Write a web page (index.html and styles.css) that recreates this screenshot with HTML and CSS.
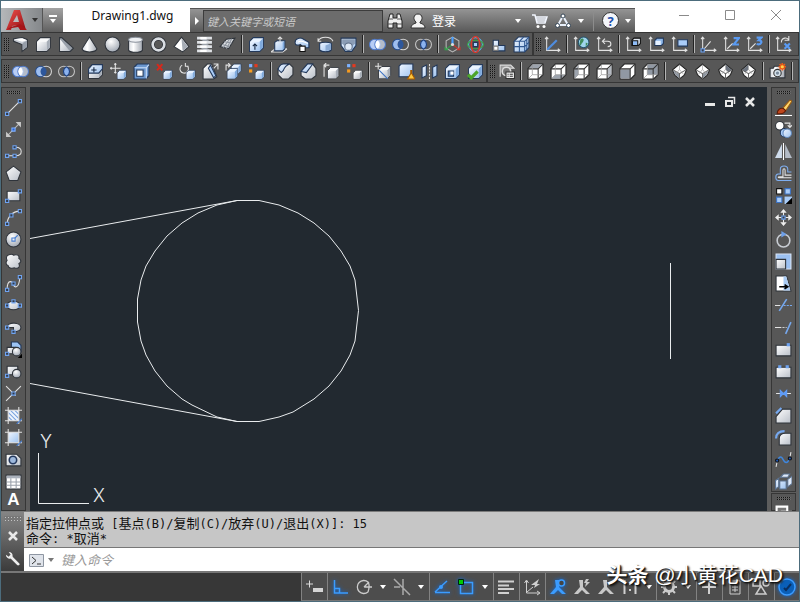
FILE: index.html
```html
<!DOCTYPE html>
<html lang="zh-CN">
<head>
    <meta charset="UTF-8">
    <meta name="viewport" content="width=device-width, initial-scale=1.0">
    <title>Drawing1.dwg</title>
    <link rel="stylesheet" href="styles.css">
</head>
<body>
    <!-- Icon sprite -->
    <svg class="sprite" aria-hidden="true">
        <defs>
            <linearGradient id="lt" x1="0" y1="0" x2="1" y2="1"><stop offset="0" stop-color="#fff"/><stop offset="1" stop-color="#b9bfc8"/></linearGradient>
            <linearGradient id="cyl" x1="0" y1="0" x2="1" y2="0"><stop offset="0" stop-color="#d5d9de"/><stop offset=".35" stop-color="#fff"/><stop offset="1" stop-color="#a2a8b1"/></linearGradient>
            <linearGradient id="bl" x1="0" y1="0" x2="1" y2="1"><stop offset="0" stop-color="#f0f6ff"/><stop offset="1" stop-color="#9dc2ef"/></linearGradient>
            <radialGradient id="ball" cx=".4" cy=".3" r=".7"><stop offset="0" stop-color="#fff"/><stop offset="1" stop-color="#a3aab5"/></radialGradient>
            <linearGradient id="red" x1="0" y1="0" x2="1" y2="1"><stop offset="0" stop-color="#f0504c"/><stop offset="1" stop-color="#8f0d12"/></linearGradient>
        </defs>
        <symbol id="cube" viewBox="0 0 16 16"><path d="M1.500 5l3.500-3.500h9.500V11L11 14.500H1.500z" class="w" fill="#f8f9fa"/><path d="M2 5.500h9V14H2z" fill="url(#lt)"/><path d="M11 5.500L14 2v9l-3 3z" fill="#a6adb7"/></symbol>
        <symbol id="bcube" viewBox="0 0 16 16"><path d="M1.500 5l3.500-3.500h9.500V11L11 14.500H1.500z" class="k" fill="#e9f3ff"/><path d="M2 5.500h9V14H2z" fill="url(#bl)"/><path d="M11 5.500L14 2v9l-3 3z" fill="#7faade"/></symbol>
        <symbol id="polysolid" viewBox="0 0 16 16"><path class="w" d="M1.500 2.500l8-1 5 2v7l-5 4V8l-8-3z" fill="#c9ced6"/><path d="M2 3l7.500-1L14 4l-4.500 1.500z" fill="#fff"/><path d="M10 6.500l4-2v6l-4 3z" fill="#979ea9"/></symbol>
        <symbol id="wedge" viewBox="0 0 16 16"><path class="w" d="M1.500 1.500h2l11 10-3 3h-10z" fill="#989fa9"/><path d="M2 3v11h9z" fill="url(#lt)"/></symbol>
        <symbol id="cone" viewBox="0 0 16 16"><path class="w" d="M8 1L1 12c1 4 13 4 14 0z" fill="url(#cyl)"/></symbol>
        <symbol id="sphere" viewBox="0 0 16 16"><circle class="w" cx="8" cy="8" r="7" fill="url(#ball)"/></symbol>
        <symbol id="cylinder" viewBox="0 0 16 16"><path class="w" d="M1.500 3.500v10c2 2.500 11 2.500 13 0v-10z" fill="url(#cyl)"/><ellipse cx="8" cy="3.500" rx="6.500" ry="2.300" fill="#eef0f3" stroke="#8b929c"/></symbol>
        <symbol id="torus" viewBox="0 0 16 16"><circle cx="8" cy="8" r="5.500" fill="none" stroke="#2b2f36" stroke-width="4"/><circle cx="8" cy="8" r="5.500" fill="none" stroke="#d9dde2" stroke-width="2.500"/></symbol>
        <symbol id="pyramid" viewBox="0 0 16 16"><path class="w" d="M8 1l7 9-6 5-8-5z" fill="#fff"/><path d="M8 2l6 8-5 4z" fill="#a6acb5"/></symbol>
        <symbol id="helix" viewBox="0 0 16 16"><path d="M5 2l7 4M5 6l7 4M5 10l7 4" stroke="#9aa1aa" stroke-width="3"/><path d="M1 2h14M1 6h14M1 10h14M1 14h14" stroke="#dfe2e6" stroke-width="2.500"/><path d="M4 2h6M4 6h6M4 10h6M4 14h6" stroke="#fff" stroke-width="2"/></symbol>
        <symbol id="planar" viewBox="0 0 16 16"><path class="w" d="M1 10L7 3l8-1-6 10-8-2z" fill="url(#lt)"/><path d="M3 8l7 2M5 5.500l7 1M4 11l6-8M7 12l5-9.500" stroke="#8e959f" fill="none"/></symbol>
        <symbol id="presspull" viewBox="0 0 16 16"><use href="#bcube"/><path class="d" d="M6.500 13V8M4.500 9.500L6.500 7.500l2 2"/></symbol>
        <symbol id="extrude" viewBox="0 0 16 16"><path class="l" d="M0 15l4-3h11M0 15h11l4-3"/><path class="k" d="M3.500 6l2-1.500h7.500V12l-2 2H3.500z" fill="url(#bl)"/><path d="M11 6l1.500-1v6.500L11 13z" fill="#7faade"/><path class="l" d="M8.500 6V1M6.500 3l2-2 2 2"/></symbol>
        <symbol id="sweep" viewBox="0 0 16 16"><path class="k" d="M1 6c0-4 5-5 8-3l5 3v5H9L6 8C4 9 1 9 1 6z" fill="url(#bl)"/><path d="M4 6c2-3 6 0 9 1" stroke="#fff" fill="none"/><path d="M5.500 9.500h5v5h-5z" fill="#fff" stroke="#111"/></symbol>
        <symbol id="revolve" viewBox="0 0 16 16"><path class="l" d="M1 5c2-5 12-5 14 0M1 2v3h3"/><path class="k" d="M2.500 7v6c2 2.500 9 2.500 11 0V7c-2-1.500-9-1.500-11 0z" fill="url(#bl)"/><path d="M8 9v5l5-1V7z" fill="#8babd4"/></symbol>
        <symbol id="loft" viewBox="0 0 16 16"><path class="k" d="M1 2h14v7l-4 5.500H5L1 9z" fill="url(#bl)"/><path d="M2 3h12v4l-3 3H5L2 7z" fill="#8a9cb5"/><circle cx="8" cy="10" r="3.500" fill="#dfe9f6" stroke="#5d6e86"/></symbol>
        <symbol id="union" viewBox="0 0 16 16"><circle cx="5.500" cy="8" r="5" fill="#b8cdf5" stroke="#4d78c8"/><circle cx="10.500" cy="8" r="5" fill="#dce7fb" fill-opacity=".7" stroke="#4d78c8"/><path d="M8 4a5 5 0 010 8 5 5 0 010-8" fill="#fff"/></symbol>
        <symbol id="subtract" viewBox="0 0 16 16"><circle cx="5.500" cy="8" r="5" fill="#9dbef0" stroke="#274d8c"/><circle cx="10.500" cy="8" r="5" fill="#555" stroke="#d5d5d5"/><path d="M8 3.500a5 5 0 010 9 5 5 0 010-9" fill="#2d579c"/></symbol>
        <symbol id="intersect" viewBox="0 0 16 16"><circle cx="5.500" cy="8" r="5" fill="none" stroke="#c4c4c4"/><circle cx="10.500" cy="8" r="5" fill="none" stroke="#c4c4c4"/><path d="M8 3.500a5 5 0 010 9 5 5 0 010-9" fill="#8bb2ee" stroke="#1d3f7c"/></symbol>
        <symbol id="move3d" viewBox="0 0 16 16"><path d="M8 1l6 3.500v7L8 15l-6-3.500v-7z" fill="none" stroke="#b9b9b9"/><path d="M8 8V1" stroke="#4aa0ff" stroke-width="2"/><path d="M8 8l-7 5M1 10v3h3" stroke="#2fa648" fill="none"/><path d="M8 8l7 5M15 10v3h-3" stroke="#d0352b" fill="none"/><circle cx="8" cy="8" r="1.500" fill="#ddd"/></symbol>
        <symbol id="rotate3d" viewBox="0 0 16 16"><circle cx="8" cy="8" r="6.500" fill="none" stroke="#5cb2e8"/><ellipse cx="8" cy="8" rx="7.500" ry="4" fill="none" stroke="#3da547"/><ellipse cx="8" cy="8" rx="4" ry="7.500" fill="none" stroke="#d3392d" stroke-width="1.500"/><path d="M6 6h4v4H6z" fill="#a9ccf8" stroke="#22385a"/></symbol>
        <symbol id="align3d" viewBox="0 0 16 16"><path class="k" d="M3 4h5v5h6v5H3z" fill="url(#bl)"/><path d="M3.500 9.500h4v4h-4z" fill="#fff" stroke="#777"/></symbol>
        <symbol id="array3d" viewBox="0 0 16 16"><path class="k" d="M1 5l4-4h10v10l-4 4H1z" fill="url(#bl)"/><path d="M1 5h10l4-4M11 5v10M1 10h10l4-4M6 5v10M6 5l4-4M13 3v10" fill="none" stroke="#2f5791"/></symbol>
        <symbol id="axes" viewBox="0 0 16 16"><path class="l" d="M2.500 1v12.500H15M1 3l1.500-2L4 3M13 12l2 1.500-2 1.500"/></symbol>
        <symbol id="ucs" viewBox="0 0 16 16"><use href="#axes"/><path d="M3 13l9-9" stroke="#4f8de0" stroke-width="2"/></symbol>
        <symbol id="world" viewBox="0 0 16 16"><use href="#axes"/><circle cx="10" cy="6" r="5" fill="#9fd4ec" stroke="#24516a"/><path d="M7 3c3-2 4 1 2 3s-1 4-3 2zM12 6l2 1-2 3z" fill="#3f8b5b"/></symbol>
        <symbol id="previous" viewBox="0 0 16 16"><use href="#axes"/><path class="l" d="M6 5h5c4 0 4 5 0 5M8.500 2.500L6 5l2.500 2.500"/></symbol>
        <symbol id="ucsface" viewBox="0 0 16 16"><use href="#axes"/><path d="M6.500 4l2-2h6v5l-2 2h-6z" fill="#dfe6ef" stroke="#111"/><path d="M7 4.500h5V9H7z" fill="#8fbcf5" stroke="#111"/></symbol>
        <symbol id="ucsobject" viewBox="0 0 16 16"><use href="#axes"/><path class="k" d="M6.500 4l2-2h6v5l-2 2h-6z" fill="#8db6e8"/><path d="M7 4.500h5v4H7z" fill="#e6f1ff"/></symbol>
        <symbol id="ucsview" viewBox="0 0 16 16"><use href="#axes"/><path class="k" d="M6.500 3.500h9v6h-9z" fill="#a9ccf8"/></symbol>
        <symbol id="origin" viewBox="0 0 16 16"><use href="#axes"/><path class="l" d="M4 12l6-7"/><path class="n" d="M1 12h3v3H1z"/></symbol>
        <symbol id="zaxis" viewBox="0 0 16 16"><use href="#axes"/><path class="l" d="M4 12l5-5"/><path class="z" d="M10 2h5l-5 6h5"/></symbol>
        <symbol id="threepoint" viewBox="0 0 16 16"><use href="#axes"/><path class="l" d="M4 12l5-5"/><path class="z" d="M10 1.500h4.500L12 4c4 0 3 5-2 3.500"/></symbol>
        <symbol id="xrotate" viewBox="0 0 16 16"><use href="#axes"/><path class="l" d="M6 6c0-5 6-5 7-2M13 0v4H9"/><path class="z" d="M9 7l5 5M14 7l-5 5"/></symbol>
        <symbol id="exface" viewBox="0 0 16 16"><use href="#cube"/><path class="k" d="M1.500 5.500l3.500-4h9.500v4l-3.500 4h-9.500z" fill="url(#bl)"/><path class="d" d="M6.500 9V4M4 6.500h5"/></symbol>
        <symbol id="moveface" viewBox="0 0 16 16"><path class="l" d="M5 0v10M0 5h10M4 1.500L5 .5l1 1M4 8.500l1 1 1-1M1.500 4l-1 1 1 1"/><use href="#bcube" x="6" y="6" width="10" height="10"/></symbol>
        <symbol id="offsetface" viewBox="0 0 16 16"><path class="k" d="M1 4l3-3h11v11l-3 3H1z" fill="#6b97cf"/><path d="M1.500 4.500h11v10M12.500 4.500L15 1.500" fill="none" stroke="#cde1fa"/><path class="k" d="M3.500 6.500h6v6h-6z" fill="#fff"/></symbol>
        <symbol id="deleteface" viewBox="0 0 16 16"><path d="M1 1l5 6M6 1L1 7" stroke="#d5291c" stroke-width="2"/><use href="#bcube" x="6" y="6" width="10" height="10"/></symbol>
        <symbol id="rotateface" viewBox="0 0 16 16"><path class="l" d="M3 2a4 4 0 105 1M6 0v3h3"/><use href="#bcube" x="6" y="6" width="10" height="10"/></symbol>
        <symbol id="taperface" viewBox="0 0 16 16"><path class="w" d="M1 5l4-4h4l5 12-3 2H1z" fill="url(#lt)"/><path class="k" d="M6 5l2-3 5 10-2 2z" fill="#a9ccf8"/><path class="l" d="M11 1h4v5M11 5l4-4"/></symbol>
        <symbol id="copyface" viewBox="0 0 16 16"><path class="l" d="M1 7V2h4M3 0l2 2-2 2"/><use href="#bcube" x="5" y="0" width="11" height="11"/><use href="#bcube" x="1" y="4" width="12" height="12"/></symbol>
        <symbol id="colorface" viewBox="0 0 16 16"><path d="M1 1h3v3H1z" fill="#7db2ff"/><path d="M6 1h3v3H6z" fill="#e33a20"/><path d="M1 6h3v3H1z" fill="#f59b20"/><use href="#bcube" x="6" y="6" width="10" height="10"/></symbol>
        <symbol id="filletedge" viewBox="0 0 16 16"><path class="w" d="M1 5l5-4h6l3 3v7l-4 4H5l-4-4z" fill="url(#lt)"/><path class="k" d="M1 6c1-3 3-5 5-5h6C9 2 7 4 6 7L4 9z" fill="url(#bl)"/></symbol>
        <symbol id="chamferedge" viewBox="0 0 16 16"><path class="w" d="M1 8l6-7h5l3 4v7l-4 3H5l-4-3z" fill="url(#lt)"/><path class="k" d="M1 8l6-7h5L6 9z" fill="url(#bl)"/></symbol>
        <symbol id="copyedge" viewBox="0 0 16 16"><path class="l" d="M1 13V2h5M3 0L1 2l2 2"/><use href="#cube" x="3" y="3" width="13" height="13"/></symbol>
        <symbol id="coloredge" viewBox="0 0 16 16"><path d="M1 1h3v3H1z" fill="#7db2ff"/><path d="M6 1h3v3H6z" fill="#e33a20"/><path d="M1 6h3v3H1z" fill="#f59b20"/><use href="#cube" x="6" y="6" width="10" height="10"/></symbol>
        <symbol id="imprint" viewBox="0 0 16 16"><use href="#cube" x="2" y="2" width="14" height="14"/><path d="M4 7l8 8" stroke="#3d73c4"/><path class="l" d="M3 0v6M0 3h6"/></symbol>
        <symbol id="clean" viewBox="0 0 16 16"><path class="k" d="M1 3l2-2h11v10l-2 2H1z" fill="url(#bl)"/><path d="M12 7v3l-3 5h7l-3-5V7z" fill="#ffc83d" stroke="#a75b00"/></symbol>
        <symbol id="separate" viewBox="0 0 16 16"><path class="k" d="M1 4l4-2v10l-4 2zM11 4l4-2v10l-4 2z" fill="url(#bl)"/><path d="M8 1v14" stroke="#ddd" stroke-dasharray="2 1"/></symbol>
        <symbol id="shell" viewBox="0 0 16 16"><use href="#bcube"/><path class="k" d="M4 7.500h5v5H4z" fill="#5a84bd"/><path d="M6 8h3v3H6z" fill="#fff"/></symbol>
        <symbol id="check" viewBox="0 0 16 16"><use href="#bcube"/><path d="M1 11l3 3 6-6" fill="none" stroke="#4ca52b" stroke-width="3"/></symbol>
        <symbol id="views" viewBox="0 0 16 16"><path d="M2 13V2h10l3 3H4" fill="#999" stroke="#ddd"/><circle cx="8" cy="8" r="4" fill="#777" stroke="#ddd" stroke-width="1.500"/><path d="M7.500 8.500h8v6h-8z" fill="#eee" stroke="#333"/><path d="M9 10.500h1M11 10.500h3M9 12.500h1M11 12.500h3" stroke="#333"/></symbol>
        <symbol id="wire" viewBox="0 0 16 16"><path d="M1 5l4-4h10v10l-4 4H1z" fill="#fff" stroke="#222"/></symbol>
        <symbol id="wirelines" viewBox="0 0 16 16"><path d="M1 5.500h9.500V15M10.500 5.500L15 1" fill="none" stroke="#333"/><path d="M5 1.500V11h9.500M1.500 14.500L5 11" fill="none" stroke="#999" stroke-width=".7"/></symbol>
        <symbol id="vtop" viewBox="0 0 16 16"><use href="#wire"/><path d="M2 5l3-3.500h9L10.500 5z" fill="#9ca3ad"/><use href="#wirelines"/></symbol>
        <symbol id="vbottom" viewBox="0 0 16 16"><use href="#wire"/><path d="M2 14.500L5 11h9l-3.500 3.500z" fill="#9ca3ad"/><use href="#wirelines"/></symbol>
        <symbol id="vleft" viewBox="0 0 16 16"><use href="#wire"/><path d="M1.500 6L5 2v9l-3.500 3.500z" fill="#9ca3ad"/><use href="#wirelines"/></symbol>
        <symbol id="vright" viewBox="0 0 16 16"><use href="#wire"/><path d="M11 6l3.500-4v9L11 14.500z" fill="#b5bac2"/><use href="#wirelines"/></symbol>
        <symbol id="vfront" viewBox="0 0 16 16"><use href="#wire"/><path d="M1.500 6h9v8.500h-9z" fill="#9098a3"/><path d="M1 5.500h9.500V15M10.500 5.500L15 1" fill="none" stroke="#333"/></symbol>
        <symbol id="vback" viewBox="0 0 16 16"><use href="#wire"/><path d="M5 1.500h9.500V11H5z" fill="#9098a3"/><use href="#wirelines"/></symbol>
        <symbol id="iso" viewBox="0 0 16 16"><path d="M8 1l6.500 5.500-2 5L8 15l-4.500-3.500-2-5z" fill="#fff" stroke="#222"/></symbol>
        <symbol id="isolines" viewBox="0 0 16 16"><path d="M2 6.500L8 10l6-3.500M8 10v5" fill="none" stroke="#666"/><path d="M8 1.500V6M4 11l4-5 4 5" fill="none" stroke="#aaa" stroke-width=".7"/></symbol>
        <symbol id="sw" viewBox="0 0 16 16"><use href="#iso"/><path d="M2 7l6 3.500v4L4 11z" fill="#8e96a1"/><use href="#isolines"/></symbol>
        <symbol id="se" viewBox="0 0 16 16"><use href="#iso"/><path d="M14 7l-6 3.500v4l4-3.500z" fill="#8e96a1"/><use href="#isolines"/></symbol>
        <symbol id="ne" viewBox="0 0 16 16"><use href="#iso"/><path d="M8 1.500l6 5L11 9 8 6z" fill="#6b727d"/><use href="#isolines"/></symbol>
        <symbol id="nw" viewBox="0 0 16 16"><use href="#iso"/><path d="M8 1.500l-6 5L5 9l3-3z" fill="#6b727d"/><use href="#isolines"/></symbol>
        <symbol id="camera" viewBox="0 0 16 16"><path class="w" d="M1 5h3l1-2h5l1 2h4v9H1z" fill="url(#cyl)"/><circle cx="8" cy="9.500" r="3.500" fill="#d3e0ea" stroke="#333"/><circle cx="8" cy="9.500" r="1.500" fill="#78889a"/><path d="M12.500 0v7M9 3.500h7M10 1l5 5M15 1l-5 5" stroke="#f05a16" stroke-width="1.500"/><circle cx="12.500" cy="3.500" r="1.500" fill="#ffd34a"/></symbol>

        <symbol id="line" viewBox="0 0 16 16"><path class="l" d="M2 14L14 2"/><path class="n" d="M.5 12.500h3v3h-3zM12.500.5h3v3h-3z"/></symbol>
        <symbol id="xline" viewBox="0 0 16 16"><path d="M3 13L13 3" stroke="#bbb"/><path d="M10 1h5v5zM1 10v5h5z" fill="#c9c9c9"/><path d="M6.500 6.500h3v3h-3z" fill="#2b62d0" stroke="#7fb0ff"/></symbol>
        <symbol id="pline" viewBox="0 0 16 16"><path class="l" d="M2 12h8c7 0 7-8 0-8H8"/><path class="n" d="M.5 10.500h3v3h-3zM7.500 10.500h3v3h-3zM7.500 2.500h3v3h-3z"/></symbol>
        <symbol id="polygon" viewBox="0 0 16 16"><path class="w" d="M8 1l7 5.500-3 8H4l-3-8z" fill="url(#lt)"/></symbol>
        <symbol id="rect" viewBox="0 0 16 16"><path class="w" d="M2 4h12v9H2z" fill="url(#lt)"/><path class="n" d="M.5 11.500h3v3h-3zM12.500 2.500h3v3h-3z"/></symbol>
        <symbol id="arc" viewBox="0 0 16 16"><path class="l" d="M2 14C2 8 7 2 14 2"/><path class="n" d="M.5 12.500h3v3h-3zM4.500 4.500h3v3h-3zM12.500.5h3v3h-3z"/></symbol>
        <symbol id="circle" viewBox="0 0 16 16"><circle class="w" cx="8" cy="8" r="7" fill="url(#ball)"/><path d="M8 8l4-4" stroke="#4a7fd0"/><path d="M6.500 6.500h3v3h-3z" fill="#e8effa" stroke="#4a7fd0"/></symbol>
        <symbol id="revcloud" viewBox="0 0 16 16"><path class="w" d="M3 2c2-1 4-1 5 0 3-1 6 0 5 3 3 2 2 4 0 5 2 4-2 5-4 4-3 1-6 0-6-2-3-1-2-4-1-5-1-2-1-4 1-5z" fill="url(#lt)"/></symbol>
        <symbol id="spline" viewBox="0 0 16 16"><path class="l" d="M2 14c0-12 6-7 6-5s5 6 6-7"/><path class="n" d="M.5 12.500h3v3h-3zM6.500 6.500h3v3h-3zM12.500.5h3v3h-3z"/></symbol>
        <symbol id="ellipse" viewBox="0 0 16 16"><ellipse class="w" cx="8" cy="8" rx="6.500" ry="4" fill="url(#lt)"/><path class="n" d="M.5 6.500h3v3h-3zM6.500 2.500h3v3h-3zM12.500 6.500h3v3h-3z"/></symbol>
        <symbol id="ellarc" viewBox="0 0 16 16"><path class="w" d="M2 8c0-6 13-5 13 0 0 4-4 4-7 4V8z" fill="url(#lt)"/><path class="n" d="M.5 6.500h3v3h-3zM6.500 10.500h3v3h-3z"/></symbol>
        <symbol id="insert" viewBox="0 0 16 16"><path class="k" d="M6 1h6l3 3v6H6z" fill="#9cc4f5"/><path class="w" d="M2 6h8v6H2z" fill="url(#lt)"/><circle class="w" cx="11" cy="10" r="4" fill="url(#ball)"/><path class="n" d="M.5 10.500h3v3h-3z"/><path d="M16 12v4h-4z" fill="#000"/></symbol>
        <symbol id="block" viewBox="0 0 16 16"><path class="w" d="M2 3h10v8H2z" fill="url(#lt)"/><circle class="w" cx="11" cy="10" r="4" fill="url(#ball)"/><path class="n" d="M.5 10.500h3v3h-3z"/></symbol>
        <symbol id="point" viewBox="0 0 16 16"><path class="l" d="M1 1l9 9M15 1L1 15"/><path class="n" d="M6.500 6.500h3v3h-3z"/></symbol>
        <symbol id="hatch" viewBox="0 0 16 16"><path d="M3 3h10v10H3z" fill="#eef4fc"/><path d="M3 9l4 4M3 5l8 8M5 3l8 8M9 3l4 4" stroke="#79a2de"/><path class="l" d="M3 0v16M13 0v16M0 3h16M0 13h16"/><path d="M11 16l5-5" stroke="#4a7fd0"/></symbol>
        <symbol id="gradient" viewBox="0 0 16 16"><path d="M3 3h10v10H3z" fill="url(#bl)"/><path class="l" d="M3 0v16M13 0v16M0 3h16M0 13h16"/><path d="M11 16l5-5" stroke="#4a7fd0"/></symbol>
        <symbol id="region" viewBox="0 0 16 16"><path class="w" d="M1 3h10l4 4v7H1z" fill="url(#lt)"/><circle cx="7.500" cy="8.500" r="3.500" fill="#9db8dc" stroke="#24395e" stroke-width="1.500"/></symbol>
        <symbol id="table" viewBox="0 0 16 16"><path class="w" d="M1 2h14v13H1z" fill="#fff"/><path d="M1.500 2.500h13V5h-13z" fill="#aab1bb"/><path d="M1.500 8.500h13M1.500 11.500h13M5.500 5v9.500M10.500 5v9.500" stroke="#9aa1ab"/></symbol>

        <symbol id="matchprop" viewBox="0 0 16 16"><path d="M7 9l7-8 2 1-6 9z" fill="#ffd66b" stroke="#9a5b12"/><path d="M2 14c0-4 3-6 6-5l2 2c-2 3-4 3-8 3z" fill="#c0471c" stroke="#601c08"/><path d="M0 15.500h16" stroke="#fff"/></symbol>
        <symbol id="copy" viewBox="0 0 16 16"><circle class="w" cx="4.500" cy="4.500" r="4" fill="#fff"/><circle class="k" cx="9" cy="11" r="4" fill="#a9ccf8"/><circle cx="11.500" cy="11.500" r="4" fill="url(#bl)" stroke="#5f86bb"/><path class="l" d="M9 2h5v4M12 4l2 2 2-2"/></symbol>
        <symbol id="mirror" viewBox="0 0 16 16"><path d="M6.500 1v13H0z" fill="#cfdcec"/><path d="M9.500 1v13H16z" fill="#b3bbc6"/><path d="M8 0v16" stroke="#fff"/></symbol>
        <symbol id="offset" viewBox="0 0 16 16"><path d="M15.500 6.500H12V4c0-4-7-4-7 0v4.500H3c-3 0-3 6 0 6h12.500" fill="none" stroke="#7eaef0"/><path class="l" d="M15.500 9.500h-6V5c0-2-2-2-2 0v6H4.500c-2 0-2 1 0 1h11"/></symbol>
        <symbol id="array" viewBox="0 0 16 16"><path d="M1.500 1.500h5v5h-5z" fill="#fff" stroke="#111"/><path d="M9.500 1.500h5v5h-5zM1.500 9.500h5v5h-5z" fill="#a9ccf8" stroke="#3d73c4"/><path d="M9 9h7v7H9z" fill="#a9ccf8"/><path d="M16 10v6h-6z" fill="#000"/></symbol>
        <symbol id="move" viewBox="0 0 16 16"><path d="M8 0l3 3.500H5zM8 16l3-3.500H5zM0 8l3.500-3v6zM16 8l-3.500-3v6z" fill="#eee"/><path d="M8 3v3M8 10v3M3 8h3M10 8h3" stroke="#eee"/><path class="n" d="M6.500 6.500h3v3h-3z"/></symbol>
        <symbol id="rotate" viewBox="0 0 16 16"><circle cx="8" cy="9" r="6" fill="none" stroke="#c8ccd2" stroke-width="1.500"/><path d="M6 0l5 3-5 3z" fill="#6d9fe8"/></symbol>
        <symbol id="scale" viewBox="0 0 16 16"><path d="M1 1h14v14H1z" fill="#9cc1f2" stroke="#dbe8fa"/><path class="w" d="M1 6h9v9H1z" fill="url(#lt)"/></symbol>
        <symbol id="stretch" viewBox="0 0 16 16"><path class="w" d="M1 1h10l4 14H1z" fill="#fff"/><path d="M8 1.500h2.500l4 13H8z" fill="#a9cbf3"/><path d="M4 11h7M9 9l3 2-3 2" stroke="#000" stroke-width="1.500" fill="none"/></symbol>
        <symbol id="trim" viewBox="0 0 16 16"><path class="l" d="M0 8h5"/><path d="M4 13L11 2" stroke="#76a8ee" stroke-width="1.500"/><path d="M8 8h8" stroke="#76a8ee" stroke-dasharray="2 1"/></symbol>
        <symbol id="extend" viewBox="0 0 16 16"><path class="l" d="M0 8h6"/><path d="M7 8h4" stroke="#ccc" stroke-dasharray="2 1"/><path d="M10 14l5-11" stroke="#76a8ee" stroke-width="1.500"/></symbol>
        <symbol id="breakpt" viewBox="0 0 16 16"><path class="w" d="M1 4h14v10H1z" fill="url(#lt)"/><path d="M11 2h3v3h-3z" fill="#6da2f0"/></symbol>
        <symbol id="break" viewBox="0 0 16 16"><path class="w" d="M1 4h14v10H1z" fill="url(#lt)"/><path d="M3 2h3v3H3zM10 2h3v3h-3z" fill="#6da2f0"/></symbol>
        <symbol id="join" viewBox="0 0 16 16"><path class="l" d="M1 8h14"/><path d="M5 5l3 3-3 3zM11 5L8 8l3 3z" fill="#5f9bf5" stroke="#5f9bf5"/></symbol>
        <symbol id="chamfer" viewBox="0 0 16 16"><path class="w" d="M1 9l6-7h8v13H1z" fill="url(#lt)"/><path d="M1 6l5-5" stroke="#76a8ee" stroke-width="2"/></symbol>
        <symbol id="fillet" viewBox="0 0 16 16"><path class="w" d="M4 15V9c0-4 3-5 6-5h5v11z" fill="url(#lt)"/><path d="M1 9c0-5 3-7 8-7" stroke="#76a8ee" stroke-width="2" fill="none"/></symbol>
        <symbol id="blend" viewBox="0 0 16 16"><path class="l" d="M1 15l1-5M14 6l1-5"/><path d="M2 9c4-7 5-1 7 1s4 0 5-4" fill="none" stroke="#3f86dd" stroke-width="1.500"/><circle cx="2" cy="9" r="1.500" fill="#1d56b5" stroke="#111"/><circle cx="14" cy="7" r="1.500" fill="#1d56b5" stroke="#111"/></symbol>
        <symbol id="explode" viewBox="0 0 16 16"><path d="M5 4l3-3h6l-2 3zM12 6l4-3v7l-4 3z" fill="#dfeafa" stroke="#5b7290"/><path d="M4.500 7.500h6V15h-6zM.5 7l3-2v8l-3 2z" fill="url(#bl)" stroke="#5b7290"/></symbol>
        <symbol id="front" viewBox="0 0 16 16"><path d="M1.500 1.500h10v7h-10zM6.500 6.500h9v8h-9z" fill="#777" stroke="#fff" stroke-width="2"/></symbol>

        <symbol id="logo" viewBox="0 0 24 24"><path d="M1 22L9 2h6l6 20h-6l-2-5-6 1-1 4z" fill="url(#red)"/><path d="M8 14l4-7 2 7z" fill="#b9babc"/><path d="M1 22l5-3 9-3 7 6h-6l-3-3-6 1z" fill="#a81418"/></symbol>
        <symbol id="find" viewBox="0 0 16 16"><path d="M3 1h3v4h4V1h3l2 7v7h-5v-5H6v5H1V8z" fill="#eee" stroke="#222"/><path d="M1 11h5M10 11h5M2 6h4M10 6h4" stroke="#555"/></symbol>
        <symbol id="user" viewBox="0 0 16 16"><path d="M8 1c5 0 5 6 2 8v1c3 1 5 2 5 5H1c0-3 2-4 5-5V9C3 7 3 1 8 1z" fill="#f4f4f4" stroke="#333"/></symbol>
        <symbol id="cart" viewBox="0 0 16 16"><path d="M0 2h3l2 8h8l2-6H4M4 6h10M5 8h9" fill="none" stroke="#f2f6ff" stroke-width="1.500"/><circle cx="6" cy="13.500" r="1.500" fill="#fff"/><circle cx="12" cy="13.500" r="1.500" fill="#fff"/></symbol>
        <symbol id="a360" viewBox="0 0 16 16"><path d="M8 3l5 9H3z" fill="none" stroke="#e8effa" stroke-width="2"/><circle cx="8" cy="3" r="2" fill="#fff" stroke="#345"/><circle cx="2.500" cy="12.500" r="2" fill="#fff" stroke="#345"/><circle cx="13.500" cy="12.500" r="2" fill="#fff" stroke="#345"/></symbol>
        <symbol id="down" viewBox="0 0 8 8"><path d="M1 2h6L4 6z" fill="currentColor"/></symbol>
        <symbol id="next" viewBox="0 0 8 8"><path d="M2 0l4 4-4 4z" fill="currentColor"/></symbol>
        <symbol id="min" viewBox="0 0 12 12"><path d="M1 6.500h10" stroke="currentColor"/></symbol>
        <symbol id="max" viewBox="0 0 12 12"><path d="M1.500 1.500h9v9h-9z" fill="none" stroke="currentColor"/></symbol>
        <symbol id="close" viewBox="0 0 12 12"><path d="M1 1l10 10M11 1L1 11" stroke="currentColor"/></symbol>
        <symbol id="docmin" viewBox="0 0 12 12"><path d="M1 8.500h10" stroke="#e8e8e8" stroke-width="3"/></symbol>
        <symbol id="docmax" viewBox="0 0 12 12"><path d="M4 1.500h6.500V8" fill="none" stroke="#e8e8e8" stroke-width="1.500"/><path d="M2 5h6v5H2z" fill="none" stroke="#e8e8e8" stroke-width="2"/></symbol>
        <symbol id="docclose" viewBox="0 0 12 12"><path d="M2 2l8 8M10 2l-8 8" stroke="#e8e8e8" stroke-width="2.500"/></symbol>
        <symbol id="wrench" viewBox="0 0 16 16"><path d="M6 6l8 8" stroke="#eee" stroke-width="3" stroke-linecap="round"/><path d="M1 4a4 4 0 005 4l2-2a4 4 0 00-4-5l2 3-2 2z" fill="#eee"/></symbol>
        <symbol id="prompt" viewBox="0 0 16 16"><path d="M.5 2.500h14v12H.5z" fill="#dfe3ea" stroke="#8e96a2"/><path d="M3 5l4 3.500L3 12M8 12h4" fill="none" stroke="#333"/></symbol>

        <symbol id="infer" viewBox="0 0 18 18"><path d="M1 6h7M4.500 2.500v7" stroke="#ddd"/><path d="M8 10h10v4H8z" fill="#d5d5d5"/></symbol>
        <symbol id="ortho" viewBox="0 0 18 18"><path d="M3.500 2v13H17M3.500 10.500h5V15" fill="none" stroke="#3b9cff" stroke-width="1.500"/></symbol>
        <symbol id="polar" viewBox="0 0 18 18"><path d="M9 9h8M9 9l5-5M13 14A6.500 6.500 0 1113 4M13 4c2 3 1 7 0 10" fill="none" stroke="#ccc" stroke-width="1.300"/></symbol>
        <symbol id="isodraft" viewBox="0 0 18 18"><path d="M1 1l16 16M10 1v16M1 9h6" fill="none" stroke="#aaa" stroke-width="1.500"/></symbol>
        <symbol id="track" viewBox="0 0 18 18"><path d="M2 14.500h15M2 14L14 3" stroke="#3b9cff" stroke-width="1.500"/><circle cx="8" cy="9" r="2" fill="#3b9cff"/></symbol>
        <symbol id="osnap" viewBox="0 0 18 18"><path d="M3.500 4.500h12v11h-12z" fill="none" stroke="#3b9cff" stroke-width="1.500"/><path d="M1.500 1.500h5v5h-5z" fill="#0c0" stroke="#021"/></symbol>
        <symbol id="lweight" viewBox="0 0 18 18"><path d="M1 3.500h16M1 7.500h11M1 11h16M1 15h11" stroke="#d0d0d0" stroke-width="2"/></symbol>
        <symbol id="dynucs" viewBox="0 0 18 18"><path d="M3.500 3v12H16M1.500 5l2-3 2 3M14 13l3 2-3 2M4 14l6-5" fill="none" stroke="#d0d0d0"/><path d="M8 7l8-6-2 5h3l-6 4 1-3z" fill="#d0d0d0"/></symbol>
        <symbol id="anno" viewBox="0 0 18 18"><path d="M6 2h4v7l7 7h-4l-4-4-4 4H1l6-7z" fill="currentColor"/></symbol>
        <symbol id="annovis" viewBox="0 0 18 18"><use href="#anno"/><circle cx="12.500" cy="5" r="3" fill="#444" stroke="currentColor" stroke-width="1.500"/></symbol>
        <symbol id="annoauto" viewBox="0 0 18 18"><use href="#anno"/><path d="M13 1l-2 4h2l-1 4 5-5h-3l2-3z" fill="currentColor"/></symbol>
        <symbol id="ratio" viewBox="0 0 18 18"><path d="M3.500 2v14M14.500 2v14M1 4l2-2M12 4l2-2" stroke="#d0d0d0" stroke-width="2"/><path d="M8 5h2v2H8zM8 11h2v2H8z" fill="#d0d0d0"/></symbol>
        <symbol id="gear" viewBox="0 0 18 18"><circle cx="9" cy="9" r="4.500" fill="none" stroke="#ccc" stroke-width="3"/><path d="M9 1v3M9 14v3M1 9h3M14 9h3M3 3l3 3M12 12l3 3M15 3l-3 3M6 12l-3 3" stroke="#ccc" stroke-width="2"/></symbol>
        <symbol id="plus" viewBox="0 0 18 18"><path d="M9 2v14M2 9h14" stroke="#d0d0d0" stroke-width="2"/></symbol>
        <symbol id="props" viewBox="0 0 18 18"><path d="M4 3h10v13H4zM6 6h6M6 9h6M6 12h6M9 5v9" fill="none" stroke="#ccc"/></symbol>
        <symbol id="isolate" viewBox="0 0 18 18"><path d="M1 1h7v7H1zM9 8l5 8H4z" fill="none" stroke="#ccc" stroke-width="1.500"/><circle cx="14" cy="5" r="3" fill="none" stroke="#ccc" stroke-width="1.500"/></symbol>
        <symbol id="perf" viewBox="0 0 18 18"><circle cx="9" cy="9" r="8" fill="#0a5fb8" stroke="#3b9cff" stroke-width="1.500"/><path d="M6 10l2 2 5-6" fill="none" stroke="#0a2f60" stroke-width="2"/></symbol>
    </svg>

    <header class="titlebar">
        <button class="app-button" aria-label="Application menu"><svg class="logo"><use href="#logo"/></svg><svg class="caret"><use href="#down"/></svg></button>
        <button class="quick-button" aria-label="Quick access"><span class="quick-line"></span><svg class="caret"><use href="#down"/></svg></button>
        <h1 class="doc-title">Drawing1.dwg</h1>
        <div class="infobar">
            <button class="info-toggle" aria-label="Collapse"><svg class="caret"><use href="#next"/></svg></button>
            <input class="search" type="text" placeholder="键入关键字或短语" aria-label="Search">
            <button class="tool" aria-label="Find"><svg><use href="#find"/></svg></button>
            <button class="signin"><svg><use href="#user"/></svg><span>登录</span><svg class="caret"><use href="#down"/></svg></button>
            <button class="tool" aria-label="Store"><svg><use href="#cart"/></svg></button>
            <button class="tool" aria-label="A360"><svg><use href="#a360"/></svg></button>
            <button class="drop" aria-label="A360 options"><svg class="caret"><use href="#down"/></svg></button>
            <span class="info-sep"></span>
            <button class="help" aria-label="Help">?</button>
            <button class="drop" aria-label="Help options"><svg class="caret"><use href="#down"/></svg></button>
        </div>
        <div class="window-buttons">
            <button aria-label="Minimize"><svg><use href="#min"/></svg></button>
            <button aria-label="Maximize"><svg><use href="#max"/></svg></button>
            <button aria-label="Close"><svg><use href="#close"/></svg></button>
        </div>
    </header>

    <div class="toolbar-row">
        <div class="bar">
            <span class="grip"></span>
            <button class="tool" aria-label="Polysolid"><svg><use href="#polysolid"/></svg></button>
            <button class="tool" aria-label="Box"><svg><use href="#cube"/></svg></button>
            <button class="tool" aria-label="Wedge"><svg><use href="#wedge"/></svg></button>
            <button class="tool" aria-label="Cone"><svg><use href="#cone"/></svg></button>
            <button class="tool" aria-label="Sphere"><svg><use href="#sphere"/></svg></button>
            <button class="tool" aria-label="Cylinder"><svg><use href="#cylinder"/></svg></button>
            <button class="tool" aria-label="Torus"><svg><use href="#torus"/></svg></button>
            <button class="tool" aria-label="Pyramid"><svg><use href="#pyramid"/></svg></button>
            <button class="tool" aria-label="Helix"><svg><use href="#helix"/></svg></button>
            <button class="tool" aria-label="Planar surface"><svg><use href="#planar"/></svg></button>
            <span class="sep"></span>
            <button class="tool" aria-label="Presspull"><svg><use href="#presspull"/></svg></button>
            <button class="tool" aria-label="Extrude"><svg><use href="#extrude"/></svg></button>
            <button class="tool" aria-label="Sweep"><svg><use href="#sweep"/></svg></button>
            <button class="tool" aria-label="Revolve"><svg><use href="#revolve"/></svg></button>
            <button class="tool" aria-label="Loft"><svg><use href="#loft"/></svg></button>
            <span class="sep"></span>
            <button class="tool" aria-label="Union"><svg><use href="#union"/></svg></button>
            <button class="tool" aria-label="Subtract"><svg><use href="#subtract"/></svg></button>
            <button class="tool" aria-label="Intersect"><svg><use href="#intersect"/></svg></button>
            <span class="sep"></span>
            <button class="tool" aria-label="3D move"><svg><use href="#move3d"/></svg></button>
            <button class="tool" aria-label="3D rotate"><svg><use href="#rotate3d"/></svg></button>
            <button class="tool" aria-label="3D align"><svg><use href="#align3d"/></svg></button>
            <button class="tool" aria-label="3D array"><svg><use href="#array3d"/></svg></button>
        </div>
        <div class="bar bar-fill">
            <span class="grip"></span>
            <button class="tool" aria-label="UCS"><svg><use href="#ucs"/></svg></button>
            <span class="sep"></span>
            <button class="tool" aria-label="World"><svg><use href="#world"/></svg></button>
            <button class="tool" aria-label="UCS previous"><svg><use href="#previous"/></svg></button>
            <span class="sep"></span>
            <button class="tool" aria-label="Face UCS"><svg><use href="#ucsface"/></svg></button>
            <button class="tool" aria-label="Object UCS"><svg><use href="#ucsobject"/></svg></button>
            <button class="tool" aria-label="View UCS"><svg><use href="#ucsview"/></svg></button>
            <span class="sep"></span>
            <button class="tool" aria-label="Origin"><svg><use href="#origin"/></svg></button>
            <button class="tool" aria-label="Z axis vector"><svg><use href="#zaxis"/></svg></button>
            <button class="tool" aria-label="3 point"><svg><use href="#threepoint"/></svg></button>
            <span class="sep"></span>
            <button class="tool" aria-label="Rotate X"><svg><use href="#xrotate"/></svg></button>
        </div>
    </div>

    <div class="toolbar-row">
        <div class="bar">
            <span class="grip"></span>
            <button class="tool" aria-label="Union"><svg><use href="#union"/></svg></button>
            <button class="tool" aria-label="Subtract"><svg><use href="#subtract"/></svg></button>
            <button class="tool" aria-label="Intersect"><svg><use href="#intersect"/></svg></button>
            <span class="sep"></span>
            <button class="tool" aria-label="Extrude faces"><svg><use href="#exface"/></svg></button>
            <button class="tool" aria-label="Move faces"><svg><use href="#moveface"/></svg></button>
            <button class="tool" aria-label="Offset faces"><svg><use href="#offsetface"/></svg></button>
            <button class="tool" aria-label="Delete faces"><svg><use href="#deleteface"/></svg></button>
            <button class="tool" aria-label="Rotate faces"><svg><use href="#rotateface"/></svg></button>
            <button class="tool" aria-label="Taper faces"><svg><use href="#taperface"/></svg></button>
            <button class="tool" aria-label="Copy faces"><svg><use href="#copyface"/></svg></button>
            <button class="tool" aria-label="Color faces"><svg><use href="#colorface"/></svg></button>
            <span class="sep"></span>
            <button class="tool" aria-label="Fillet edges"><svg><use href="#filletedge"/></svg></button>
            <button class="tool" aria-label="Chamfer edges"><svg><use href="#chamferedge"/></svg></button>
            <button class="tool" aria-label="Copy edges"><svg><use href="#copyedge"/></svg></button>
            <button class="tool" aria-label="Color edges"><svg><use href="#coloredge"/></svg></button>
            <span class="sep"></span>
            <button class="tool" aria-label="Imprint"><svg><use href="#imprint"/></svg></button>
            <button class="tool" aria-label="Clean"><svg><use href="#clean"/></svg></button>
            <button class="tool" aria-label="Separate"><svg><use href="#separate"/></svg></button>
            <button class="tool" aria-label="Shell"><svg><use href="#shell"/></svg></button>
            <button class="tool" aria-label="Check"><svg><use href="#check"/></svg></button>
        </div>
        <div class="bar bar-fill">
            <span class="grip"></span>
            <button class="tool" aria-label="Named views"><svg><use href="#views"/></svg></button>
            <span class="sep"></span>
            <button class="tool" aria-label="Top"><svg><use href="#vtop"/></svg></button>
            <button class="tool" aria-label="Bottom"><svg><use href="#vbottom"/></svg></button>
            <button class="tool" aria-label="Left"><svg><use href="#vleft"/></svg></button>
            <button class="tool" aria-label="Right"><svg><use href="#vright"/></svg></button>
            <button class="tool" aria-label="Front"><svg><use href="#vfront"/></svg></button>
            <button class="tool" aria-label="Back"><svg><use href="#vback"/></svg></button>
            <span class="sep"></span>
            <button class="tool" aria-label="SW isometric"><svg><use href="#sw"/></svg></button>
            <button class="tool" aria-label="SE isometric"><svg><use href="#se"/></svg></button>
            <button class="tool" aria-label="NE isometric"><svg><use href="#ne"/></svg></button>
            <button class="tool" aria-label="NW isometric"><svg><use href="#nw"/></svg></button>
            <span class="sep"></span>
            <button class="tool" aria-label="Create camera"><svg><use href="#camera"/></svg></button>
            <span class="sep"></span>
        </div>
    </div>

    <main class="workspace">
        <div class="dock">
            <div class="bar bar-vertical bar-fill">
                <span class="grip"></span>
                <button class="tool" aria-label="Line"><svg><use href="#line"/></svg></button>
                <button class="tool" aria-label="Construction line"><svg><use href="#xline"/></svg></button>
                <button class="tool" aria-label="Polyline"><svg><use href="#pline"/></svg></button>
                <button class="tool" aria-label="Polygon"><svg><use href="#polygon"/></svg></button>
                <button class="tool" aria-label="Rectangle"><svg><use href="#rect"/></svg></button>
                <button class="tool" aria-label="Arc"><svg><use href="#arc"/></svg></button>
                <button class="tool" aria-label="Circle"><svg><use href="#circle"/></svg></button>
                <button class="tool" aria-label="Revision cloud"><svg><use href="#revcloud"/></svg></button>
                <button class="tool" aria-label="Spline"><svg><use href="#spline"/></svg></button>
                <button class="tool" aria-label="Ellipse"><svg><use href="#ellipse"/></svg></button>
                <button class="tool" aria-label="Ellipse arc"><svg><use href="#ellarc"/></svg></button>
                <button class="tool" aria-label="Insert block"><svg><use href="#insert"/></svg></button>
                <button class="tool" aria-label="Make block"><svg><use href="#block"/></svg></button>
                <button class="tool" aria-label="Point"><svg><use href="#point"/></svg></button>
                <button class="tool" aria-label="Hatch"><svg><use href="#hatch"/></svg></button>
                <button class="tool" aria-label="Gradient"><svg><use href="#gradient"/></svg></button>
                <button class="tool" aria-label="Region"><svg><use href="#region"/></svg></button>
                <button class="tool" aria-label="Table"><svg><use href="#table"/></svg></button>
                <button class="tool mtext" aria-label="Multiline text">A</button>
            </div>
        </div>

        <section class="canvas">
            <svg class="drawing">
                <path d="M0 151.500L207 113.500M0 296.500L207 334.500M640.500 176v96"/>
                <polygon points="207,113.500 229,113.500 249,118 268,126 284,136 299,149 311,164 320,179 325,193 328.500,223.500 325,254 320,268 311,284 299,299 284,312 263,325 249,330 229,334.500 207,334.500 187,330 162,318 152,312 137,299 125,284 116,268 111,254 107.500,235 107.500,212 111,193 116,179 125,164 137,149 152,136 168,126 187,118"/>
            </svg>
            <svg class="ucs-icon" viewBox="0 0 76 84">
                <path d="M3.500 20v50.500H54"/>
                <text x="11" y="15">Y</text>
                <text x="64" y="69">X</text>
            </svg>
            <div class="doc-buttons">
                <button aria-label="Minimize drawing"><svg><use href="#docmin"/></svg></button>
                <button aria-label="Restore drawing"><svg><use href="#docmax"/></svg></button>
                <button aria-label="Close drawing"><svg><use href="#docclose"/></svg></button>
            </div>
        </section>

        <div class="dock dock-right">
            <div class="bar bar-vertical">
                <span class="grip"></span>
                <button class="tool" aria-label="Match properties"><svg><use href="#matchprop"/></svg></button>
                <button class="tool" aria-label="Copy"><svg><use href="#copy"/></svg></button>
                <button class="tool" aria-label="Mirror"><svg><use href="#mirror"/></svg></button>
                <button class="tool" aria-label="Offset"><svg><use href="#offset"/></svg></button>
                <button class="tool" aria-label="Array"><svg><use href="#array"/></svg></button>
                <button class="tool" aria-label="Move"><svg><use href="#move"/></svg></button>
                <button class="tool" aria-label="Rotate"><svg><use href="#rotate"/></svg></button>
                <button class="tool" aria-label="Scale"><svg><use href="#scale"/></svg></button>
                <button class="tool" aria-label="Stretch"><svg><use href="#stretch"/></svg></button>
                <button class="tool" aria-label="Trim"><svg><use href="#trim"/></svg></button>
                <button class="tool" aria-label="Extend"><svg><use href="#extend"/></svg></button>
                <button class="tool" aria-label="Break at point"><svg><use href="#breakpt"/></svg></button>
                <button class="tool" aria-label="Break"><svg><use href="#break"/></svg></button>
                <button class="tool" aria-label="Join"><svg><use href="#join"/></svg></button>
                <button class="tool" aria-label="Chamfer"><svg><use href="#chamfer"/></svg></button>
                <button class="tool" aria-label="Fillet"><svg><use href="#fillet"/></svg></button>
                <button class="tool" aria-label="Blend curves"><svg><use href="#blend"/></svg></button>
                <button class="tool" aria-label="Explode"><svg><use href="#explode"/></svg></button>
            </div>
            <div class="bar bar-vertical bar-fill">
                <span class="grip"></span>
                <button class="tool" aria-label="Bring to front"><svg><use href="#front"/></svg></button>
            </div>
        </div>
    </main>

    <section class="command">
        <div class="command-handle">
            <span class="grip"></span>
            <button aria-label="Close command line"><svg><use href="#docclose"/></svg></button>
            <button aria-label="Customize"><svg class="wrench"><use href="#wrench"/></svg></button>
        </div>
        <div class="command-body">
            <div class="history">
                <p><span>指定拉伸点或</span> [<span>基点</span>(B)/<span>复制</span>(C)/<span>放弃</span>(U)/<span>退出</span>(X)]: 15</p>
                <p><span>命令</span>: *<span>取消</span>*</p>
            </div>
            <div class="command-line">
                <button class="prompt" aria-label="Recent commands"><svg><use href="#prompt"/></svg><svg class="caret"><use href="#down"/></svg></button>
                <input type="text" placeholder="键入命令" aria-label="Command">
            </div>
        </div>
    </section>

    <footer class="statusbar">
        <div class="group"><button aria-label="Infer constraints"><svg><use href="#infer"/></svg></button></div>
        <div class="group">
            <button class="on" aria-label="Ortho"><svg><use href="#ortho"/></svg></button>
            <button aria-label="Polar tracking"><svg><use href="#polar"/></svg></button>
            <button class="drop" aria-label="Polar options"><svg class="caret"><use href="#down"/></svg></button>
            <button aria-label="Isometric drafting"><svg><use href="#isodraft"/></svg></button>
            <button class="drop" aria-label="Isometric options"><svg class="caret"><use href="#down"/></svg></button>
        </div>
        <div class="group">
            <button class="on" aria-label="Object snap tracking"><svg><use href="#track"/></svg></button>
            <button class="on" aria-label="Object snap"><svg><use href="#osnap"/></svg></button>
            <button class="drop" aria-label="Snap options"><svg class="caret"><use href="#down"/></svg></button>
        </div>
        <div class="group"><button aria-label="Lineweight"><svg><use href="#lweight"/></svg></button></div>
        <div class="group"><button aria-label="Dynamic UCS"><svg><use href="#dynucs"/></svg></button></div>
        <div class="group group-tight">
            <button class="on" aria-label="Annotation visibility"><svg><use href="#annovis"/></svg></button>
            <button aria-label="Auto scale"><svg><use href="#annoauto"/></svg></button>
            <button aria-label="Annotation scale"><svg><use href="#anno"/></svg></button>
            <button aria-label="Scale ratio"><svg><use href="#ratio"/></svg></button>
            <button class="drop" aria-label="Scale options"><svg class="caret"><use href="#down"/></svg></button>
        </div>
        <div class="group">
            <button aria-label="Workspace"><svg><use href="#gear"/></svg></button>
            <button class="drop" aria-label="Workspace options"><svg class="caret"><use href="#down"/></svg></button>
        </div>
        <div class="group"><button aria-label="Annotation monitor"><svg><use href="#plus"/></svg></button></div>
        <div class="group"><button aria-label="Quick properties"><svg><use href="#props"/></svg></button></div>
        <div class="group"><button aria-label="Isolate objects"><svg><use href="#isolate"/></svg></button></div>
        <div class="group group-tight"><button class="on" aria-label="Graphics performance"><svg><use href="#perf"/></svg></button></div>
    </footer>

    <div class="watermark"><b>头条</b> @小黄花CAD</div>
</body>
</html>
```
FILE: styles.css
```css
* {
    box-sizing: border-box;
}
body {
    display: flex;
    flex-direction: column;
    height: 100vh;
    margin: 0;
    overflow: hidden;
    position: relative;
    border: 1px solid #4c6c7c;
    background-color: #5d5d5d;
    font-family: "Noto Sans", "Noto Sans CJK SC", sans-serif;
    font-size: 12px;
    color: #fff;
}
button {
    display: flex;
    align-items: center;
    justify-content: center;
    flex: none;
    margin: 0;
    padding: 0;
    border: none;
    background: none;
    color: inherit;
    font: inherit;
}
svg {
    display: block;
    flex: none;
    width: 16px;
    height: 16px;
}
.sprite {
    position: absolute;
    width: 0;
    height: 0;
}
.caret {
    width: 8px;
    height: 8px;
}

/* icon strokes */
.w {
    stroke: #2f343b;
}
.k {
    stroke: #22385a;
}
.l {
    fill: none;
    stroke: #e2e2e2;
}
.d {
    fill: none;
    stroke: #10233f;
}
.n {
    fill: #333b49;
    stroke: #6fa4f2;
}
.z {
    fill: none;
    stroke: #5a9bf3;
    stroke-width: 2;
}

/* title bar */
.titlebar {
    display: flex;
    align-items: flex-end;
    flex: none;
    height: 31px;
    background-color: #fff;
}
.app-button {
    gap: 2px;
    width: 41px;
    height: 24px;
    background: linear-gradient(90deg, #b4b7b9, #85888b);
    color: #333;
}
.logo {
    width: 24px;
    height: 24px;
}
.quick-button {
    flex-direction: column;
    width: 21px;
    height: 24px;
    border-left: 1px solid #555;
    background: linear-gradient(#a3a3a3, #606060);
}
.quick-line {
    width: 8px;
    height: 2px;
    background-color: #fff;
}
.doc-title {
    width: 127px;
    margin: 0;
    padding-left: 12px;
    color: #111;
    font-size: 12px;
    font-weight: normal;
    line-height: 32px;
    text-align: center;
}
.infobar {
    display: flex;
    align-items: center;
    flex: 1;
    min-width: 0;
    height: 24px;
    background: linear-gradient(#949494, #595959);
    border-top: 1px solid #555;
}
.info-toggle {
    width: 13px;
    height: 23px;
}
.search {
    width: 180px;
    height: 22px;
    margin: 0;
    padding: 0 3px;
    border: 1px solid #3c3c3c;
    background-color: #6c6c6c;
    color: #fff;
    font: italic 11px "Noto Sans CJK SC", sans-serif;
}
.search::placeholder {
    color: #c9c9c9;
}
.infobar .tool {
    height: 22px;
}
.signin {
    flex: 1;
    justify-content: flex-start;
    gap: 6px;
    padding: 0 6px 0 4px;
}
.signin .caret {
    margin-left: auto;
}
.drop {
    width: 14px;
}
.info-sep {
    width: 1px;
    height: 20px;
    margin: 0 6px 0 5px;
    background-color: #8c8c8c;
}
.help {
    width: 17px;
    height: 17px;
    margin: 0 2px;
    border: 1px solid #333;
    border-radius: 50%;
    background-color: #f4f6fa;
    color: #1c4fae;
    font-weight: bold;
    font-size: 13px;
    line-height: 16px;
}
.window-buttons {
    display: flex;
    align-self: stretch;
    margin-left: 26px;
    color: #8a8a8a;
}
.window-buttons button {
    width: 46px;
    height: 28px;
}
.window-buttons svg {
    width: 12px;
    height: 12px;
}

/* toolbars */
.toolbar-row {
    display: flex;
    flex: none;
    height: 24px;
    margin-bottom: 3px;
}
.bar {
    display: flex;
    align-items: center;
    flex: none;
    overflow: hidden;
    background-color: #575757;
    box-shadow: inset 0 0 0 1px #363636;
}
.bar-fill {
    flex: 1;
    min-width: 0;
    min-height: 0;
}
.grip {
    flex: none;
    width: 5px;
    height: 14px;
    margin: 0 0 0 3px;
    background:
        repeating-linear-gradient(#575757 0 1px, transparent 1px 2px),
        repeating-linear-gradient(90deg, #161616 0 1px, #6c6c6c 1px 2px);
}
.tool {
    width: 23px;
    height: 22px;
}
.bar .tool svg {
    width: 17px;
    height: 17px;
}
.sep {
    flex: none;
    width: 2px;
    height: 18px;
    margin: 0 2px;
    border-left: 1px solid #222;
    border-right: 1px solid #b5b5b5;
}

/* drawing area */
.workspace {
    display: flex;
    flex: 1;
    gap: 4px;
    min-height: 0;
    margin-top: 1px;
}
.dock {
    display: flex;
    flex-direction: column;
    flex: none;
    gap: 1px;
    width: 25px;
}
.dock-right {
    width: 28px;
    padding-right: 3px;
}
.bar-vertical {
    flex-direction: column;
}
.bar-vertical .grip {
    width: 14px;
    height: 4px;
    margin: 3px 0 2px;
}
.bar .mtext {
    height: 16px;
    font: bold 17px "Liberation Sans", sans-serif;
}
.canvas {
    position: relative;
    flex: 1;
    overflow: hidden;
    background-color: #222930;
}
.drawing {
    width: 100%;
    height: 100%;
    fill: none;
    stroke: #e9ecee;
}
.ucs-icon {
    position: absolute;
    left: 5px;
    bottom: -6px;
    width: 76px;
    height: 84px;
    overflow: visible;
    fill: none;
    stroke: #e9ecee;
}
.ucs-icon text {
    fill: #e9ecee;
    stroke: none;
    font: 300 18px "Inter", sans-serif;
    text-anchor: middle;
}
.doc-buttons {
    display: flex;
    position: absolute;
    top: 5px;
    right: 7px;
}
.doc-buttons button {
    width: 20px;
    height: 20px;
}
.doc-buttons svg,
.command-handle svg {
    width: 12px;
    height: 12px;
}

/* command line */
.command {
    display: flex;
    flex: none;
    border-top: 1px solid #7b7b7b;
    border-bottom: 2px solid #777;
}
.command-handle {
    display: flex;
    flex-direction: column;
    align-items: center;
    flex: none;
    width: 23px;
    background: linear-gradient(#858585, #3b3b3b);
}
.command-handle .grip {
    width: 18px;
    height: 6px;
    margin: 4px 0 2px;
    background: radial-gradient(circle, #c4c4c4 1px, #777 1px) 0 0 / 3px 3px;
}
.command-handle button {
    width: 22px;
    height: 23px;
}
.command-handle .wrench {
    width: 15px;
    height: 15px;
}
.command-body {
    flex: 1;
}
.history {
    padding: 3px 2px 2px;
    border-bottom: 1px solid #777;
    background-color: #c6c6c6;
    color: #111;
    font: 12px "DejaVu Sans Mono", monospace;
}
.history p {
    margin: 0;
    height: 15px;
    line-height: 15px;
    white-space: pre;
}
.history span {
    font: 13px "Noto Sans CJK SC", sans-serif;
    line-height: 15px;
}
.command-line {
    display: flex;
    align-items: center;
    height: 23px;
    background-color: #fff;
}
.prompt {
    gap: 2px;
    padding-left: 5px;
    color: #777;
}
.command-line input {
    flex: 1;
    min-width: 0;
    height: 22px;
    padding: 0 6px;
    border: none;
    background: none;
    font: italic 13px "Noto Sans CJK SC", sans-serif;
}
.command-line input::placeholder {
    color: #999;
}

/* status bar */
.statusbar {
    display: flex;
    justify-content: flex-end;
    flex: none;
    height: 28px;
    background-color: #373737;
}
.group {
    display: flex;
    padding-right: 1px;
    border-left: 1px solid #828282;
    border-bottom: 1px solid #777;
    background-color: #4d4d4d;
    color: #c8c8c8;
}
.group button {
    width: 24px;
}
.group-tight {
    padding-right: 0;
}
.group .drop {
    width: 14px;
    color: #fff;
}
.group svg {
    width: 18px;
    height: 18px;
}
.group .caret {
    width: 8px;
    height: 8px;
}
.group .on {
    color: #3b9cff;
}
.on svg {
    filter: drop-shadow(0 0 2px #0a6be0);
}

.watermark {
    position: absolute;
    right: 16px;
    bottom: 11px;
    color: #fff;
    font: 21px/30px "Liberation Sans", "Noto Sans CJK SC", sans-serif;
    text-shadow: 1px 1px 1px #111, 2px 2px 2px #222;
    white-space: nowrap;
}
```
